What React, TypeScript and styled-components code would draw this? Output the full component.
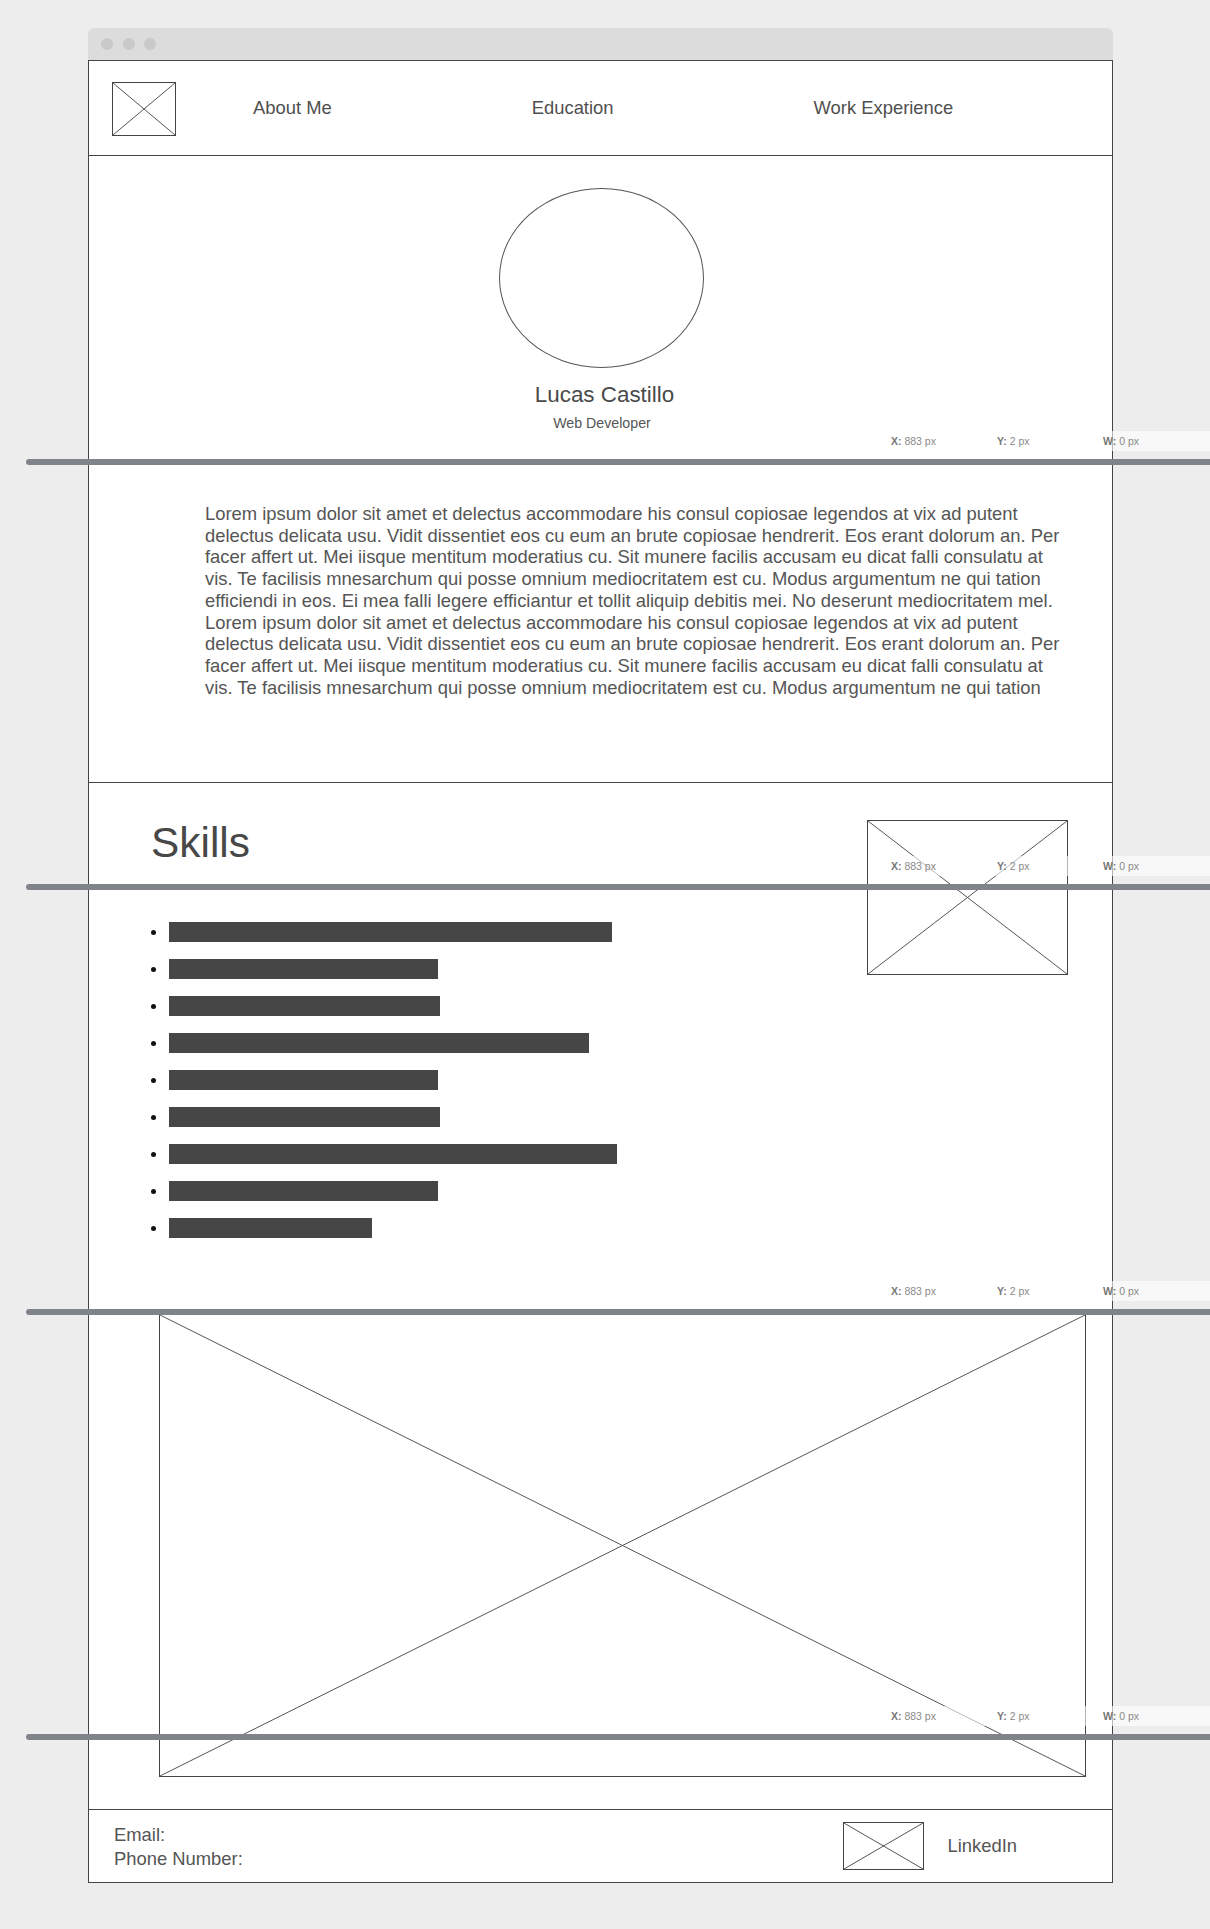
import React from 'react';
import styled, { createGlobalStyle } from 'styled-components';

const GlobalStyle = createGlobalStyle`
  html, body {
    margin: 0;
    padding: 0;
    background: #ededed;
  }
  body {
    font-family: "Liberation Sans", Arial, sans-serif;
    color: #4f4f4f;
    overflow-x: hidden;
  }
  * {
    box-sizing: border-box;
  }
`;

const Page = styled.div`
  position: relative;
  min-height: 1929px;
  padding: 28px 0 0 88px;
  overflow: hidden;
`;

const Window = styled.div`
  width: 1025px;
`;

const TitleBar = styled.div`
  height: 32px;
  display: flex;
  align-items: center;
  gap: 9.5px;
  padding-left: 13px;
  background: #dcdcdc;
  border-radius: 6px 6px 0 0;
`;

const Dot = styled.span`
  width: 12px;
  height: 12px;
  border-radius: 50%;
  background: #c9c9c9;
`;

const Frame = styled.div`
  background: #fff;
  border: 1px solid #444;
`;

const Nav = styled.nav`
  height: 95px;
  display: flex;
  align-items: center;
  padding: 2px 0 0 23px;
  border-bottom: 1px solid #444;
`;

const NavLinks = styled.div`
  display: flex;
  gap: 200px;
  margin: -2px 0 0 77px;
  font-size: 18.4px;
  color: #4f4f4f;
`;

const BoxFrame = styled.div<{ $w: number; $h: number }>`
  width: ${(p) => p.$w}px;
  height: ${(p) => p.$h}px;
  flex-shrink: 0;
  border: 1px solid #444;

  svg {
    display: block;
    width: 100%;
    height: 100%;
  }
`;

const Hero = styled.section`
  height: 306px;
  display: flex;
  flex-direction: column;
  align-items: center;
  padding: 32px 0 0 2px;
`;

const Avatar = styled.div`
  width: 205px;
  height: 180px;
  border-radius: 50%;
  border: 1px solid #555;
`;

const Name = styled.h1`
  margin: 14px 0 0;
  padding-left: 6px;
  font-size: 22.4px;
  line-height: 26px;
  font-weight: 400;
  color: #4a4a4a;
`;

const Role = styled.div`
  margin-top: 7px;
  padding-left: 1px;
  font-size: 14.2px;
  line-height: 17px;
  color: #555;
`;

const About = styled.section`
  height: 321px;
  padding: 41px 0 0 116px;
  border-bottom: 1px solid #444;
`;

const AboutText = styled.p`
  margin: 0;
  width: 864px;
  font-size: 18.4px;
  line-height: 21.7px;
  color: #555;
`;

const Skills = styled.section`
  height: 529px;
  display: grid;
  grid-template-columns: 1fr 201px;
  grid-template-rows: auto 1fr;
  align-items: start;
  padding: 35px 44px 0 62px;
`;

const SkillsTitle = styled.h2`
  margin: 0;
  font-size: 42.4px;
  line-height: 50px;
  font-weight: 400;
  color: #474747;
`;

const SkillsPicture = styled.div`
  grid-column: 2;
  grid-row: 1 / span 2;
  margin-top: 2px;
`;

const SkillList = styled.ul`
  grid-column: 1;
  margin: 54px 0 0;
  padding: 0;
  list-style: none;
  display: flex;
  flex-direction: column;
  gap: 17px;
`;

const SkillItem = styled.li`
  display: flex;
  align-items: center;
  gap: 13px;
  height: 20px;

  &::before {
    content: '';
    width: 5px;
    height: 5px;
    border-radius: 50%;
    background: #111;
  }
`;

const SkillBar = styled.div`
  height: 20px;
  background: #464646;
`;

const Media = styled.section`
  height: 497px;
  padding: 2px 0 0 70px;
`;

const Footer = styled.footer`
  height: 73px;
  display: flex;
  align-items: center;
  padding: 0 95px 0 25px;
  border-top: 1px solid #444;
  font-size: 18.4px;
  color: #555;
`;

const Contact = styled.div`
  flex: 1;
  line-height: 24.5px;
  margin-top: 2px;
`;

const LinkedIn = styled.span`
  margin-left: 23px;
`;

const GuideLayer = styled.div`
  position: absolute;
  inset: 0;
  pointer-events: none;
  overflow: hidden;
`;

const GuideBar = styled.div<{ $top: number }>`
  position: absolute;
  top: ${(p) => p.$top}px;
  left: 26px;
  right: -10px;
  height: 6px;
  border-radius: 3px;
  background: #80838a;
`;

const GuideLabels = styled.div<{ $top: number }>`
  position: absolute;
  top: ${(p) => p.$top - 28}px;
  left: 885px;
  right: 0;
  height: 20px;
  display: flex;
  align-items: center;
  background: rgba(255, 255, 255, 0.6);
  font-family: "Liberation Sans", Arial, sans-serif;
  font-size: 10.5px;
  color: #8a8a8a;
  white-space: nowrap;
`;

const GuideLabel = styled.span`
  flex: 0 0 106px;
  padding-left: 6px;

  b {
    color: #777;
  }
`;

const Placeholder = ({ w, h }: { w: number; h: number }) => (
  <BoxFrame $w={w} $h={h}>
    <svg viewBox="0 0 100 100" preserveAspectRatio="none">
      <line x1="0" y1="0" x2="100" y2="100" stroke="#555" strokeWidth="1" vectorEffect="non-scaling-stroke" />
      <line x1="100" y1="0" x2="0" y2="100" stroke="#555" strokeWidth="1" vectorEffect="non-scaling-stroke" />
    </svg>
  </BoxFrame>
);

const skills = [443, 269, 271, 420, 269, 271, 448, 269, 203];
const guides = [459, 884, 1309, 1734];

const aboutText =
  'Lorem ipsum dolor sit amet et delectus accommodare his consul copiosae legendos at vix ad putent delectus delicata usu. Vidit dissentiet eos cu eum an brute copiosae hendrerit. Eos erant dolorum an. Per facer affert ut. Mei iisque mentitum moderatius cu. Sit munere facilis accusam eu dicat falli consulatu at vis. Te facilisis mnesarchum qui posse omnium mediocritatem est cu. Modus argumentum ne qui tation efficiendi in eos. Ei mea falli legere efficiantur et tollit aliquip debitis mei. No deserunt mediocritatem mel. Lorem ipsum dolor sit amet et delectus accommodare his consul copiosae legendos at vix ad putent delectus delicata usu. Vidit dissentiet eos cu eum an brute copiosae hendrerit. Eos erant dolorum an. Per facer affert ut. Mei iisque mentitum moderatius cu. Sit munere facilis accusam eu dicat falli consulatu at vis. Te facilisis mnesarchum qui posse omnium mediocritatem est cu. Modus argumentum ne qui tation';

const App = () => {
  return (
    <Page>
      <GlobalStyle />
      <Window>
        <TitleBar>
          <Dot />
          <Dot />
          <Dot />
        </TitleBar>
        <Frame>
          <Nav>
            <Placeholder w={64} h={54} />
            <NavLinks>
              <span>About Me</span>
              <span>Education</span>
              <span>Work Experience</span>
            </NavLinks>
          </Nav>

          <Hero>
            <Avatar />
            <Name>Lucas Castillo</Name>
            <Role>Web Developer</Role>
          </Hero>

          <About>
            <AboutText>{aboutText}</AboutText>
          </About>

          <Skills>
            <SkillsTitle>Skills</SkillsTitle>
            <SkillsPicture>
              <Placeholder w={201} h={155} />
            </SkillsPicture>
            <SkillList>
              {skills.map((width, i) => (
                <SkillItem key={i}>
                  <SkillBar style={{ width }} />
                </SkillItem>
              ))}
            </SkillList>
          </Skills>

          <Media>
            <Placeholder w={927} h={463} />
          </Media>

          <Footer>
            <Contact>
              <div>Email:</div>
              <div>Phone Number:</div>
            </Contact>
            <Placeholder w={81} h={48} />
            <LinkedIn>LinkedIn</LinkedIn>
          </Footer>
        </Frame>
      </Window>

      <GuideLayer>
        {guides.map((top) => (
          <React.Fragment key={top}>
            <GuideLabels $top={top}>
              <GuideLabel>
                <b>X:</b> 883 px
              </GuideLabel>
              <GuideLabel>
                <b>Y:</b> 2 px
              </GuideLabel>
              <GuideLabel>
                <b>W:</b> 0 px
              </GuideLabel>
            </GuideLabels>
            <GuideBar $top={top} />
          </React.Fragment>
        ))}
      </GuideLayer>
    </Page>
  );
};

export default App;
